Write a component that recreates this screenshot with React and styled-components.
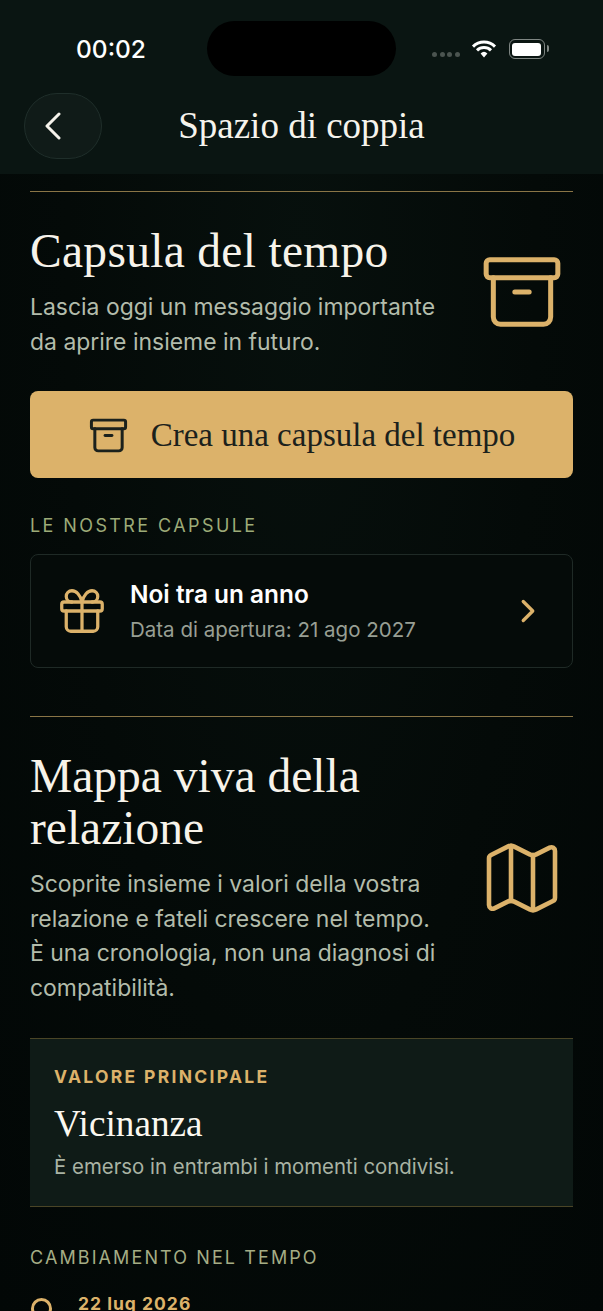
import React from 'react'
import styled, { createGlobalStyle } from 'styled-components'
import { Archive, ChevronRight, Gift, Map as MapIcon } from 'lucide-react'

const GlobalStyle = createGlobalStyle`
  html, body {
    margin: 0;
    padding: 0;
    height: 1311px;
    overflow: hidden;
    background: #030807;
  }
  * { box-sizing: border-box; }
`

const SERIF = `"Liberation Serif", "Times New Roman", serif`
const SANS = `Inter, "Noto Sans", sans-serif`
const GOLD = '#dcb26a'

const App = () => (
  <Screen>
    <GlobalStyle />
    <Header>
      <StatusBar>
        <Clock>00:02</Clock>
        <Island />
        <StatusIcons>
          <SignalDots>
            <Dot /><Dot /><Dot /><Dot />
          </SignalDots>
          <svg width="26" height="20" viewBox="0 0 26 20" fill="none">
            <path d="M2 7.6a15.6 15.6 0 0 1 22 0" stroke="#fff" strokeWidth="3" />
            <path d="M6 11.4a10 10 0 0 1 14 0" stroke="#fff" strokeWidth="3" />
            <path d="M9.6 14.4a5 5 0 0 1 6.8 0L13 18.4z" fill="#fff" />
          </svg>
          <Battery>
            <BatteryFill />
          </Battery>
        </StatusIcons>
      </StatusBar>
      <NavBar>
        <BackButton>
          <svg width="16" height="28" viewBox="0 0 16 28" fill="none">
            <path d="M14 2 2 14l12 12" stroke="#f5f2ea" strokeWidth="3" strokeLinecap="round" strokeLinejoin="round" />
          </svg>
        </BackButton>
        <NavTitle>Spazio di coppia</NavTitle>
      </NavBar>
    </Header>

    <Content>
      <Section>
        <SectionHead>
          <HeadText>
            <Title $track="0.3px">Capsula del tempo</Title>
            <Lead>Lascia oggi un messaggio importante da aprire insieme in futuro.</Lead>
          </HeadText>
          <HeadIcon>
            <Archive size={86} strokeWidth={1.4} color={GOLD} />
          </HeadIcon>
        </SectionHead>
        <PrimaryButton>
          <Archive size={41} strokeWidth={1.75} color="#1b211c" />
          <span>Crea una capsula del tempo</span>
        </PrimaryButton>
        <Label>LE NOSTRE CAPSULE</Label>
        <CapsuleCard>
          <Gift size={54} strokeWidth={1.45} color={GOLD} />
          <CapsuleText>
            <CapsuleName>Noi tra un anno</CapsuleName>
            <CapsuleDate>Data di apertura: 21 ago 2027</CapsuleDate>
          </CapsuleText>
          <ChevronRight size={38} strokeWidth={2.1} color={GOLD} />
        </CapsuleCard>
      </Section>

      <Section $second>
        <SectionHead>
          <HeadText>
            <Title>Mappa viva della relazione</Title>
            <Lead>Scoprite insieme i valori della vostra relazione e fateli crescere nel tempo. È una cronologia, non una diagnosi di compatibilità.</Lead>
          </HeadText>
          <HeadIcon>
            <MapIcon size={88} strokeWidth={1.25} color={GOLD} />
          </HeadIcon>
        </SectionHead>
        <ValueCard>
          <ValueLabel>VALORE PRINCIPALE</ValueLabel>
          <ValueName>Vicinanza</ValueName>
          <ValueNote>È emerso in entrambi i momenti condivisi.</ValueNote>
        </ValueCard>
        <Label $timeline>CAMBIAMENTO NEL TEMPO</Label>
        <TimelineRow>
          <TimelineDot />
          <TimelineDate>22 lug 2026</TimelineDate>
        </TimelineRow>
      </Section>
    </Content>
  </Screen>
)

export default App

const Screen = styled.div`
  width: 603px;
  height: 1311px;
  overflow: hidden;
  background: radial-gradient(ellipse at 50% 20%, #07100d 0%, #040a08 55%, #020706 100%);
  font-family: ${SANS};
`

const Header = styled.header`
  height: 174px;
  background: #0a1512;
`

const StatusBar = styled.div`
  height: 93px;
  display: flex;
  align-items: flex-start;
  padding-top: 21px;
`

const Clock = styled.div`
  width: 207px;
  padding: 13px 0 0 76px;
  color: #fff;
  font-size: 24.5px;
  line-height: 30px;
  font-weight: 500;
`

const Island = styled.div`
  width: 189px;
  height: 55px;
  border-radius: 28px;
  background: #000;
`

const StatusIcons = styled.div`
  display: flex;
  align-items: center;
  padding: 18px 0 0 36px;
`

const SignalDots = styled.div`
  display: flex;
  gap: 2.5px;
  margin: 10px 11px 0 0;
`

const Dot = styled.span`
  width: 5px;
  height: 5px;
  border-radius: 50%;
  background: #4b5450;
`

const Battery = styled.div`
  position: relative;
  width: 36px;
  height: 20px;
  margin-left: 12px;
  padding: 2.5px;
  border: 1.5px solid #7f8683;
  border-radius: 6px;
  &::after {
    content: '';
    position: absolute;
    right: -5px;
    top: 5px;
    width: 2px;
    height: 7px;
    border-radius: 0 2px 2px 0;
    background: #7f8683;
  }
`

const BatteryFill = styled.div`
  height: 100%;
  border-radius: 3px;
  background: #fff;
`

const NavBar = styled.div`
  position: relative;
  display: flex;
  align-items: center;
  justify-content: center;
  height: 66px;
`

const BackButton = styled.button`
  position: absolute;
  left: 24px;
  top: 0;
  width: 78px;
  height: 66px;
  padding: 0 0 0 20px;
  display: flex;
  align-items: center;
  border: 1px solid #1f2e2a;
  border-radius: 33px;
  background: #101b18;
`

const NavTitle = styled.h1`
  margin: 0;
  color: #f6f3ec;
  font-family: ${SERIF};
  font-size: 37px;
  line-height: 44px;
  font-weight: 400;
`

const Content = styled.main`
  padding: 17px 30px 0;
`

const Section = styled.section`
  border-top: 1px solid #8a7546;
  padding-top: 33px;
  margin-top: ${p => (p.$second ? '48px' : '0')};
`

const SectionHead = styled.div`
  display: flex;
  justify-content: space-between;
  align-items: center;
`

const HeadText = styled.div`
  width: 410px;
`

const HeadIcon = styled.div`
  width: 90px;
  margin-right: 6px;
  display: flex;
  justify-content: center;
`

const Title = styled.h2`
  margin: 0;
  color: #f7f3ea;
  font-family: ${SERIF};
  font-size: 47.5px;
  line-height: 52px;
  font-weight: 400;
  letter-spacing: ${p => p.$track || '0'};
`

const Lead = styled.p`
  margin: 13px 0 0;
  color: #b3bcab;
  font-size: 22.95px;
  line-height: 34.6px;
`

const PrimaryButton = styled.button`
  width: 100%;
  height: 87px;
  margin-top: 32px;
  padding: 2px 0 0;
  display: flex;
  align-items: center;
  justify-content: center;
  gap: 22px;
  border: none;
  border-radius: 8px;
  background: ${GOLD};
  color: #1b211c;
  font-family: ${SERIF};
  font-size: 33px;
`

const Label = styled.div`
  margin-top: ${p => (p.$timeline ? '40px' : '37px')};
  color: ${p => (p.$timeline ? '#a5ad85' : '#9dab78')};
  font-size: 18px;
  line-height: 22px;
  letter-spacing: ${p => (p.$timeline ? '2.1px' : '2.4px')};
`

const CapsuleCard = styled.div`
  height: 114px;
  margin-top: 17px;
  padding: 0 25px 0 24px;
  display: flex;
  align-items: center;
  gap: 21px;
  border: 1px solid #1f2a26;
  border-radius: 8px;
  background: #050b09;
`

const CapsuleText = styled.div`
  flex: 1;
`

const CapsuleName = styled.div`
  color: #fff;
  font-size: 24.4px;
  line-height: 30px;
  font-weight: 600;
`

const CapsuleDate = styled.div`
  margin-top: 8px;
  color: #989f94;
  font-size: 20.5px;
  line-height: 26px;
`

const ValueCard = styled.div`
  margin-top: 32px;
  height: 169px;
  padding: 27px 24px 0;
  border-top: 1px solid #4a4526;
  border-bottom: 1px solid #4a4526;
  background: #0f1b17;
`

const ValueLabel = styled.div`
  color: ${GOLD};
  font-size: 17.5px;
  line-height: 22px;
  font-weight: 700;
  letter-spacing: 2.3px;
`

const ValueName = styled.div`
  margin-top: 14px;
  color: #fbf8f0;
  font-family: ${SERIF};
  font-size: 37.2px;
  line-height: 44px;
`

const ValueNote = styled.div`
  margin-top: 7px;
  color: #a9b3a4;
  font-size: 20.4px;
  line-height: 28px;
`

const TimelineRow = styled.div`
  display: flex;
  margin-top: 27px;
`

const TimelineDot = styled.span`
  flex: none;
  width: 21px;
  height: 21px;
  margin: 2px 0 0 1px;
  border: 3.5px solid ${GOLD};
  border-radius: 50%;
`

const TimelineDate = styled.div`
  margin-left: 26px;
  color: ${GOLD};
  font-size: 17.5px;
  line-height: 16px;
  font-weight: 700;
  letter-spacing: 1px;
`
